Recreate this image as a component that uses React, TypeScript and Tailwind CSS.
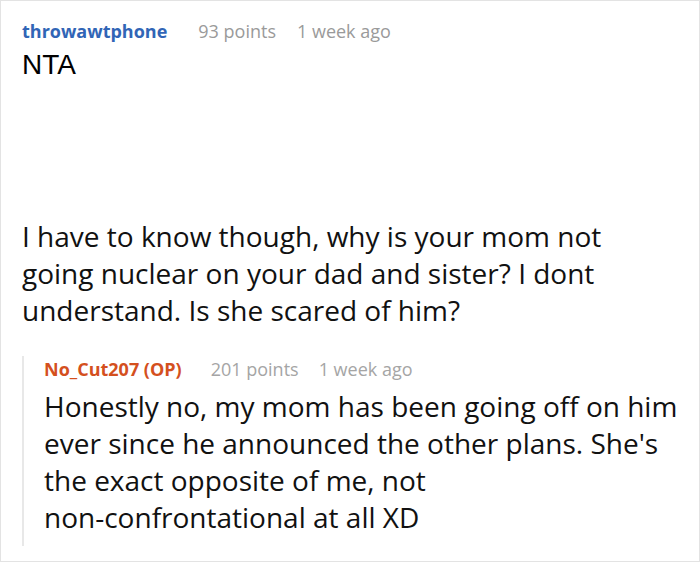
export default function App() {
  return (
    <div className="w-[700px] h-[562px] bg-white border border-[#e3e3e3] overflow-hidden" style={{ fontFamily: '"Open Sans", "Noto Sans", sans-serif' }}>
      <div className="pl-[21px] pt-[17px] pr-[14px]">
        <div className="flex items-baseline text-[18px] leading-[26px]">
          <span className="font-bold text-[#3165b6]">throwawtphone</span>
          <span className="ml-[31px] text-[#9a9a9a]">93 points</span>
          <span className="ml-[21px] text-[#9a9a9a]">1 week ago</span>
        </div>
        <p className="mt-[2px] text-[28px] leading-[37px] text-black" style={{ fontFamily: '"Liberation Sans", Arial, sans-serif' }}>NTA</p>
        <p className="mt-[135px] pr-[50px] text-[28px] leading-[37px] text-[#111111]">
          I have to know though, why is your mom not going nuclear on your dad and sister? I dont understand. Is she scared of him?
        </p>
        <div className="mt-[27px] border-l-2 border-[#e8e8e8] pl-[20px] pb-[10px]">
          <div className="flex items-baseline text-[18px] leading-[26px]">
            <span className="font-bold text-[#d4501e]">No_Cut207 (OP)</span>
            <span className="ml-[29px] text-[#a5a5a5]">201 points</span>
            <span className="ml-[20px] text-[#a5a5a5]">1 week ago</span>
          </div>
          <p className="mt-[6px] text-[28px] leading-[37px] text-[#111111]">
            Honestly no, my mom has been going off on him ever since he announced the other plans. She's the exact opposite of me, not <span className="whitespace-nowrap">non-confrontational</span> at all XD
          </p>
        </div>
      </div>
    </div>
  );
}
